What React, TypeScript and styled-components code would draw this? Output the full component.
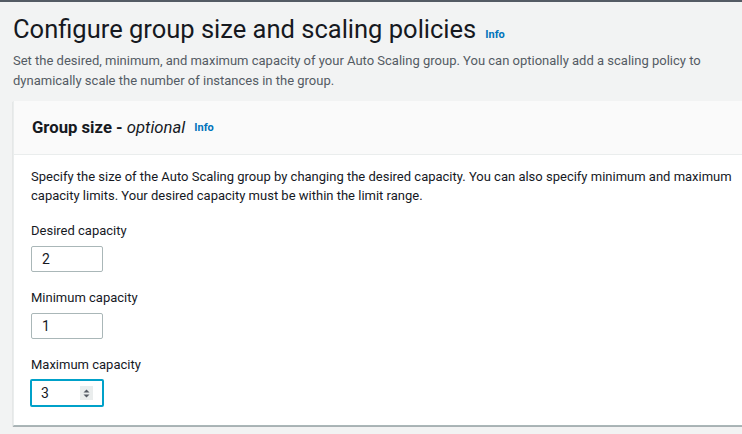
import styled, { createGlobalStyle } from "styled-components";

const GlobalStyle = createGlobalStyle`
  html, body {
    margin: 0;
    padding: 0;
    background: #f2f3f3;
  }
  body {
    font-family: Roboto, "Noto Sans", sans-serif;
    color: #16191f;
    overflow: hidden;
  }
`;

interface Field {
  label: string;
  value: string;
  focused?: boolean;
}

const fields: Field[] = [
  { label: "Desired capacity", value: "2" },
  { label: "Minimum capacity", value: "1" },
  { label: "Maximum capacity", value: "3", focused: true },
];

function App() {
  return (
    <>
      <GlobalStyle />
      <Page>
        <TitleRow>
          <Title>Configure group size and scaling policies</Title>
          <InfoLink>Info</InfoLink>
        </TitleRow>
        <Description>
          Set the desired, minimum, and maximum capacity of your Auto Scaling
          group. You can optionally add a scaling policy to dynamically scale
          the number of instances in the group.
        </Description>
        <Panel>
          <PanelHeader>
            <PanelTitle>
              Group size - <em>optional</em>
            </PanelTitle>
            <InfoLink>Info</InfoLink>
          </PanelHeader>
          <PanelBody>
            <BodyText>
              Specify the size of the Auto Scaling group by changing the desired
              capacity. You can also specify minimum and maximum capacity
              limits. Your desired capacity must be within the limit range.
            </BodyText>
            {fields.map((field) => (
              <FieldBox key={field.label}>
                <Label>{field.label}</Label>
                <Input focused={field.focused}>
                  <span>{field.value}</span>
                  {field.focused && (
                    <Spinner>
                      <svg width="7" height="9" viewBox="0 0 7 9">
                        <path d="M3.5 0.5 L6.5 3.5 H0.5 Z" fill="#545b64" />
                        <path d="M3.5 8.5 L6.5 5.5 H0.5 Z" fill="#545b64" />
                      </svg>
                    </Spinner>
                  )}
                </Input>
              </FieldBox>
            ))}
          </PanelBody>
        </Panel>
      </Page>
    </>
  );
}

const Page = styled.div`
  border-top: 2px solid #545b64;
  padding: 10px 0 0 13px;
  height: 427px;
  box-sizing: border-box;
`;

const TitleRow = styled.div`
  display: flex;
  align-items: baseline;
  gap: 9px;
`;

const Title = styled.h1`
  margin: 0;
  font-size: 25.5px;
  font-weight: 400;
  line-height: 34px;
`;

const InfoLink = styled.span`
  color: #0073bb;
  font-weight: 700;
  font-size: 11px;
`;

const Description = styled.p`
  margin: 5px 0 0;
  font-size: 13px;
  line-height: 20px;
  color: #545b64;
  padding-right: 30px;
`;

const Panel = styled.div`
  margin-top: 10px;
  margin-right: -20px;
  background: #fff;
  border-left: 1px solid #eaeded;
  border-bottom: 1px solid #aab7b8;
  box-shadow: 0 1px 1px rgba(0, 28, 36, 0.3);
`;

const PanelHeader = styled.div`
  background: #fafafa;
  border-bottom: 1px solid #eaeded;
  height: 54px;
  box-sizing: border-box;
  padding: 0 18px;
  display: flex;
  align-items: center;
  gap: 9px;
`;

const PanelTitle = styled.h2`
  margin: 0;
  font-size: 16.7px;
  font-weight: 700;
  em {
    font-weight: 400;
    font-style: italic;
  }
`;

const PanelBody = styled.div`
  padding: 12px 20px 18px 17px;
`;

const BodyText = styled.p`
  margin: 0 0 16px;
  font-size: 13px;
  line-height: 19px;
`;

const FieldBox = styled.div`
  margin-bottom: 16px;
  &:last-child {
    margin-bottom: 0;
  }
`;

const Label = styled.div`
  font-size: 13px;
  line-height: 20px;
  margin-bottom: 5px;
`;

const Input = styled.div<{ focused?: boolean }>`
  width: 72px;
  height: 26px;
  box-sizing: border-box;
  border: ${(p) => (p.focused ? "2px solid #00a1c9" : "1px solid #aab7b8")};
  border-radius: 2px;
  display: flex;
  align-items: center;
  justify-content: space-between;
  padding: ${(p) => (p.focused ? "0 9px 0 9px" : "0 9px 0 10px")};
  font-size: 14px;
  background: #fff;
  ${(p) => p.focused && "height: 28px; width: 74px; margin: -1px 0 0 -1px;"}
`;

const Spinner = styled.span`
  width: 13px;
  height: 14px;
  background: #eaeded;
  display: flex;
  align-items: center;
  justify-content: center;
`;

export default App;
